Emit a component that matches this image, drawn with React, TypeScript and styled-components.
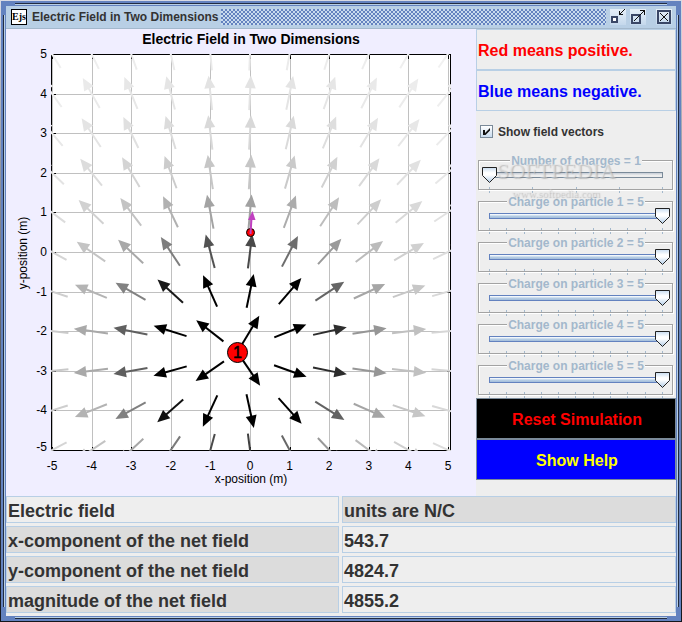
import React from "react";
import styled, { createGlobalStyle, css } from "styled-components";

const SANS = '"Liberation Sans", Arial, sans-serif';

const GlobalStyle = createGlobalStyle`
  *, *::before, *::after { box-sizing: border-box; }
  body {
    margin: 0;
    background: linear-gradient(#d9dbe4 0, #8d8f98 30%, #55585f 60%, #14161c 100%);
    font-family: ${SANS};
    color: #333;
  }
`;

const Desktop = styled.div`
  min-height: 100vh;
  padding: 1px;
`;

const edgeLines = (side: string) =>
  `linear-gradient(to ${side}, #6382bf 2px, #222c40 2px, #222c40 3px, #b8cfe5 3px, #b8cfe5 4px, #6382bf 4px)`;

const Frame = styled.main`
  padding: 5px;
  background:
    ${edgeLines("bottom")} center top / calc(100% - 28px) 5px no-repeat,
    ${edgeLines("top")} center bottom / calc(100% - 28px) 5px no-repeat,
    ${edgeLines("right")} left center / 5px calc(100% - 28px) no-repeat,
    ${edgeLines("left")} right center / 5px calc(100% - 28px) no-repeat,
    #6382bf;
`;

const TitleBar = styled.header`
  display: flex;
  align-items: center;
  height: 23px;
  padding: 0 4px 0 5px;
  background: #b8cfe5;
  border-bottom: 1px solid #a3b8cc;
`;

const AppIcon = styled.span`
  display: grid;
  place-items: center;
  width: 16px;
  height: 16px;
  border: 1px solid #000;
  background: #fff;
  color: #000;
  font: bold 10px/14px "Liberation Serif", serif;
`;

const WindowTitle = styled.h1`
  margin: 0 3px 0 5px;
  font-size: 12px;
  line-height: 16px;
  white-space: nowrap;
`;

const Grip = styled.div`
  flex: 1;
  height: 16px;
  background:
    radial-gradient(circle at 1px 1px, #6382bf 1px, transparent 1px) 0 0 / 4px 4px,
    radial-gradient(circle at 1px 1px, #6382bf 1px, transparent 1px) 2px 2px / 4px 4px,
    #c9dbee;
`;

const WindowButtons = styled.div`
  display: flex;
  gap: 4px;
  margin-left: 4px;

  button:last-child { margin-left: 6px; }
`;

const WindowButton = styled.button`
  width: 16px;
  height: 16px;
  padding: 0;
  border: 0;
  background: linear-gradient(#e6eff8, #c4d8ec);

  svg { display: block; }
`;

const Body = styled.div`
  background: #eee;
`;

const Simulation = styled.div`
  display: grid;
  grid-template-columns: minmax(0, 1fr) 200px;
`;

const Plot = styled.svg`
  display: block;
  width: 100%;
  background: #f0eeff;
  font-family: ${SANS};
`;

const Controls = styled.aside`
  position: relative;
  display: flex;
  flex-direction: column;
`;

const Note = styled.p<{ $color: string }>`
  height: 41px;
  margin: 0;
  padding: 0 1px;
  border: 1px solid #b8cfe5;
  color: ${(p) => p.$color};
  font-size: 16px;
  font-weight: bold;
  line-height: 41px;
`;

const CheckRow = styled.label`
  display: flex;
  align-items: center;
  gap: 5px;
  height: 41px;
  padding-left: 4px;
  font-size: 12px;
  font-weight: bold;
`;

const checkMark =
  "url(\"data:image/svg+xml,%3Csvg xmlns='http://www.w3.org/2000/svg' width='11' height='11'%3E%3Cpath d='M2 4h2v3l5-5v2.500L4.500 9H2z' fill='%23111'/%3E%3C/svg%3E\")";

const CheckBox = styled.input`
  appearance: none;
  width: 13px;
  height: 13px;
  margin: 0;
  border: 1px solid #7a8a99;
  background: linear-gradient(#fff, #c8dbee);

  &:checked { background: ${checkMark}, linear-gradient(#fff, #c8dbee); }
`;

const SliderGroup = styled.fieldset`
  min-width: 0;
  height: 38px;
  margin: 0 3px 3px 2px;
  padding: 0 2px 0 3px;
  border: 1px solid #a3a3a3;
  box-shadow: 1px 1px 0 #fff, inset 1px 1px 0 #fff;
`;

const SliderTitle = styled.legend`
  margin: 0 auto;
  padding: 2px 1px 0;
  background: #eee;
  color: #a3b8cc;
  font-size: 12px;
  font-weight: bold;
  line-height: 15px;
`;

const thumb =
  "url(\"data:image/svg+xml,%3Csvg xmlns='http://www.w3.org/2000/svg' width='15' height='16'%3E%3Cdefs%3E%3ClinearGradient id='g' x2='0' y2='1'%3E%3Cstop stop-color='%23c8dcf0'/%3E%3Cstop offset='.35' stop-color='%23fff'/%3E%3Cstop offset='.5' stop-color='%23fff'/%3E%3Cstop offset='1' stop-color='%23b0cbe6'/%3E%3C/linearGradient%3E%3C/defs%3E%3Cpath d='M.5 .5h14v8l-7 7l-7-7z' fill='url(%23g)' stroke='%23222'/%3E%3C/svg%3E\")";

const Range = styled.input<{ $filled: boolean }>`
  appearance: none;
  display: block;
  width: 100%;
  height: 16px;
  margin: -2px 0 0;
  background:
    ${(p) =>
      p.$filled
        ? css`linear-gradient(#fff, #e4eef8 25%, #b8cfe5 50%, #a3bddb)`
        : css`linear-gradient(#c5ccd6, #eee 60%)`}
      center 6px / calc(100% - 16px) 4px no-repeat,
    linear-gradient(${(p) => (p.$filled ? "#6382bf, #6382bf" : "#7a8a99, #7a8a99")})
      center 5px / calc(100% - 14px) 6px no-repeat;

  &::-webkit-slider-thumb {
    appearance: none;
    width: 15px;
    height: 16px;
    background: ${thumb};
  }
`;

const Ticks = styled.div`
  display: flex;
  justify-content: space-between;
  margin: 4px 7px 0;

  i {
    width: 1px;
    height: 6px;
    background: linear-gradient(#a3b8cc 2px, transparent 2px, transparent 4px, #a3b8cc 4px);
  }
`;

const Action = styled.button<{ $bg: string; $color: string }>`
  height: 41px;
  padding: 2px 0 0 2px;
  border: 1px solid #7a8a99;
  background: ${(p) => p.$bg};
  color: ${(p) => p.$color};
  font: bold 16px ${SANS};
`;

const Watermark = styled.div`
  position: absolute;
  top: 128px;
  left: 18px;
  width: 124px;
  text-align: center;
  pointer-events: none;
  font-family: "Liberation Serif", serif;
  color: rgba(232, 232, 232, 0.5);
  text-shadow: 1px 1px 1px rgba(130, 130, 130, 0.45);

  span { display: block; font-size: 22px; line-height: 28px; }
  small { display: block; font-size: 11px; line-height: 16px; }
`;

const Readout = styled.table`
  display: block;
  padding-bottom: 3px;
  font-size: 18px;
  font-weight: bold;
  text-align: left;

  tbody { display: grid; gap: 3px; }
  tr { display: grid; grid-template-columns: calc(50% - 2px) 1fr; gap: 3px; }
`;

const cell = css<{ $shaded: boolean }>`
  height: 27px;
  padding: 0 1px;
  border: 1px solid #b8cfe5;
  background: ${(p) => (p.$shaded ? "#dcdcdc" : "#eee")};
  line-height: 28px;
`;
const HeadCell = styled.th<{ $shaded: boolean }>`${cell}`;
const ValueCell = styled.td<{ $shaded: boolean }>`${cell}`;

const UNIT = 39.6;
const toX = (x: number) => 250 + x * UNIT;
const toY = (y: number) => 252 - y * UNIT;
const STEPS = [-5, -4, -3, -2, -1, 0, 1, 2, 3, 4, 5];
const CHARGE = { x: -0.32, y: -2.53 };

function Arrow({ x, y }: { x: number; y: number }) {
  const dx = x - CHARGE.x;
  const dy = y - CHARGE.y;
  const strength = Math.min(1, 4.65 / (dx * dx + dy * dy));
  const shade = Math.round(255 * (1 - strength));
  const color = `rgb(${shade},${shade},${shade})`;
  const angle = (Math.atan2(-dy, dx) * 180) / Math.PI;
  return (
    <g transform={`translate(${toX(x)} ${toY(y)}) rotate(${angle})`}>
      <path d="M-16.500 0H8" stroke={color} strokeWidth="2" />
      <path d="M18 0L5.500 5.500V-5.500Z" fill={color} />
    </g>
  );
}

function FieldPlot() {
  return (
    <Plot viewBox="6 29 470 467" role="img" aria-label="Electric Field in Two Dimensions">
      <clipPath id="area"><rect x="51" y="54" width="400" height="397" /></clipPath>
      <text x="251" y="44" textAnchor="middle" fontSize="14" fontWeight="bold">
        Electric Field in Two Dimensions
      </text>
      <rect x="51.5" y="54.5" width="399" height="396" fill="#fff" />
      <g stroke="#c0c0c0" shapeRendering="crispEdges">
        {STEPS.map((s) => (
          <path key={s} d={`M${Math.round(toX(s)) + 0.5} 55V450M52 ${Math.round(toY(s)) + 0.5}H450`} />
        ))}
      </g>
      <g stroke="#000" fill="none" shapeRendering="crispEdges">
        <rect x="51.5" y="54.5" width="399" height="396" />
        {STEPS.map((s) => {
          const px = Math.round(toX(s)) + 0.5;
          const py = Math.round(toY(s)) + 0.5;
          return <path key={s} d={`M${px} 55v4M${px} 450v-3M52 ${py}h4M450 ${py}h-3`} />;
        })}
      </g>
      <g clipPath="url(#area)">
        {STEPS.map((x) => STEPS.map((y) => <Arrow key={`${x},${y}`} x={x} y={y} />))}
      </g>
      <circle cx="250.5" cy="232.5" r="4" fill="red" stroke="#000" />
      <path d="M250.5 234L251.5 218" stroke="#c040c0" strokeWidth="2" />
      <path d="M252.5 211L255.5 220H248Z" fill="#c040c0" />
      <circle cx="237.5" cy="352.5" r="10" fill="red" stroke="#000" />
      <text x="237.5" y="358" textAnchor="middle" fontSize="16" stroke="#000" strokeWidth="0.5">1</text>
      <g fontSize="12">
        {STEPS.map((s) => (
          <React.Fragment key={s}>
            <text x={toX(s)} y="470" textAnchor="middle">{s}</text>
            <text x="47" y={s === -5 ? 451 : Math.round(toY(s)) + 4} textAnchor="end">{s}</text>
          </React.Fragment>
        ))}
        <text x="251" y="483" textAnchor="middle">x-position (m)</text>
        <text transform="translate(27 253) rotate(-90)" textAnchor="middle">y-position (m)</text>
      </g>
    </Plot>
  );
}

interface SliderProps {
  title: string;
  min: number;
  value: number;
  ticks: number;
}

function Slider({ title, min, value, ticks }: SliderProps) {
  return (
    <SliderGroup>
      <SliderTitle>{title} = {value}</SliderTitle>
      <Range
        type="range"
        aria-label={title}
        min={min}
        max={5}
        defaultValue={value}
        $filled={value === 5}
      />
      <Ticks>{Array.from({ length: ticks }, (_, i) => <i key={i} />)}</Ticks>
    </SliderGroup>
  );
}

const READINGS = [
  ["Electric field", "units are N/C"],
  ["x-component of the net field", "543.7"],
  ["y-component of the net field", "4824.7"],
  ["magnitude of the net field", "4855.2"],
];

export default function App() {
  return (
    <>
      <GlobalStyle />
      <Desktop>
        <Frame>
          <TitleBar>
            <AppIcon>Ejs</AppIcon>
            <WindowTitle>Electric Field in Two Dimensions</WindowTitle>
            <Grip />
            <WindowButtons>
              <WindowButton aria-label="Minimize">
                <svg width="16" height="16" shapeRendering="crispEdges" fill="none">
                  <rect x="2" y="8" width="5" height="5" fill="#fff" stroke="#3a4766" strokeWidth="2" />
                  <path d="M14.5 0.5L10 5M9.5 2V5.5M9 5.5H13" stroke="#111" />
                </svg>
              </WindowButton>
              <WindowButton aria-label="Maximize">
                <svg width="16" height="16" shapeRendering="crispEdges" fill="none">
                  <rect x="2" y="6" width="8" height="8" stroke="#3a4766" strokeWidth="2" />
                  <path d="M4 12L14 2M10 1.5H14.5V6" stroke="#111" />
                </svg>
              </WindowButton>
              <WindowButton aria-label="Close">
                <svg width="16" height="16" shapeRendering="crispEdges" fill="none">
                  <rect x="2" y="2" width="12" height="12" stroke="#3a4766" strokeWidth="2" />
                  <path d="M4 4L12 12M12 4L4 12" stroke="#111" />
                </svg>
              </WindowButton>
            </WindowButtons>
          </TitleBar>
          <Body>
            <Simulation>
              <FieldPlot />
              <Controls>
                <Note $color="#f00">Red means positive.</Note>
                <Note $color="#00f">Blue means negative.</Note>
                <CheckRow>
                  <CheckBox type="checkbox" defaultChecked />
                  Show field vectors
                </CheckRow>
                <Slider title="Number of charges" min={1} value={1} ticks={5} />
                {[1, 2, 3, 4, 5].map((n) => (
                  <Slider key={n} title={`Charge on particle ${n}`} min={-5} value={5} ticks={11} />
                ))}
                <Action $bg="#000" $color="#f00">Reset Simulation</Action>
                <Action $bg="#00f" $color="#ff0">Show Help</Action>
                <Watermark aria-hidden="true">
                  <span>SOFTPEDIA</span>
                  <small>www.softpedia.com</small>
                </Watermark>
              </Controls>
            </Simulation>
            <Readout>
              <tbody>
                {READINGS.map(([label, value], i) => (
                  <tr key={label}>
                    <HeadCell scope="row" $shaded={i > 0}>{label}</HeadCell>
                    <ValueCell $shaded={i === 0}>{value}</ValueCell>
                  </tr>
                ))}
              </tbody>
            </Readout>
          </Body>
        </Frame>
      </Desktop>
    </>
  );
}
